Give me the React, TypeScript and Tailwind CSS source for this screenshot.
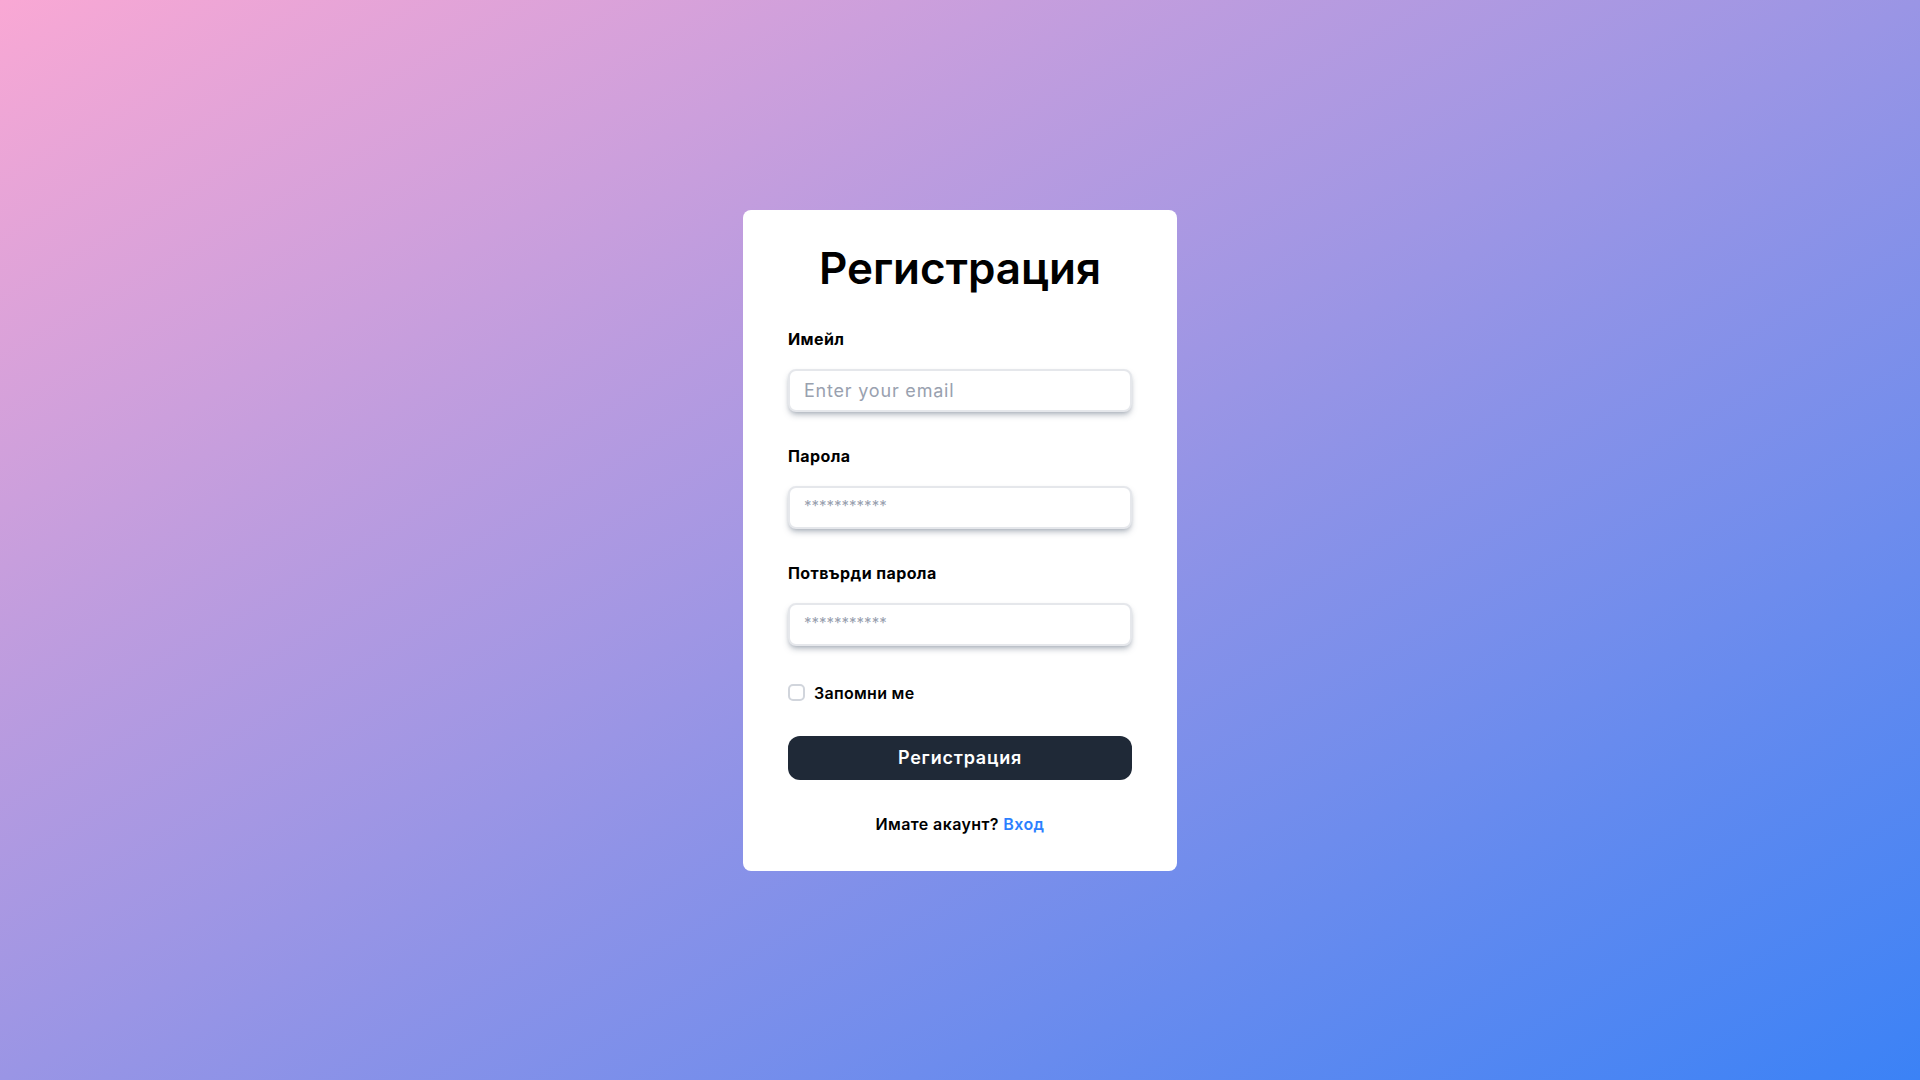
import React from "react";

export default function App() {
  const font = { fontFamily: "Inter, 'Noto Sans', sans-serif" };
  const inputCls =
    "mt-[20px] h-[43px] w-full rounded-lg border-2 border-gray-200 bg-white px-[14px] text-gray-700 placeholder:text-gray-400 shadow-[0_4px_6px_-1px_rgba(71,85,105,0.35),0_2px_4px_-2px_rgba(71,85,105,0.3)] outline-none";
  return (
    <div
      className="min-h-screen w-full flex items-center justify-center bg-[linear-gradient(to_bottom_right,#f9a8d4,#3b82f6)]"
      style={font}
    >
      <div className="w-[434px] h-[661px] bg-white rounded-lg px-[45px] pt-[33px] pb-[37px] flex flex-col">
        <h1 className="text-[44px] leading-[50px] font-semibold text-black text-center">
          Регистрация
        </h1>
        <form className="mt-[36px] flex flex-col" onSubmit={(e) => e.preventDefault()}>
          <label className="block h-[20px] text-[16px] leading-[20px] tracking-[0.4px] font-bold text-black">Имейл</label>
          <input
            type="email"
            placeholder="Enter your email"
            className={inputCls + " text-[18px] tracking-[0.8px]"}
          />
          <label className="mt-[34px] block h-[20px] text-[16px] leading-[20px] tracking-[0.4px] font-bold text-black">Парола</label>
          <input
            type="password"
            placeholder="***********"
            className={inputCls + " pb-[4px] text-[15px]"}
          />
          <label className="mt-[34px] block h-[20px] text-[16px] leading-[20px] tracking-[0.4px] font-bold text-black">Потвърди парола</label>
          <input
            type="password"
            placeholder="***********"
            className={inputCls + " pb-[4px] text-[15px]"}
          />
          <div className="mt-[37px] h-[20px] flex items-center gap-[9px]">
            <input
              type="checkbox"
              className="appearance-none w-[17px] h-[17px] rounded-[5px] border-2 border-gray-300 bg-white"
            />
            <span className="text-[16px] leading-[20px] tracking-[0.3px] font-semibold text-black">Запомни ме</span>
          </div>
          <button
            type="submit"
            className="mt-[33px] h-[44px] w-full rounded-xl bg-[#1f2937] text-white text-[18px] tracking-[0.8px] font-semibold"
          >
            Регистрация
          </button>
          <p className="mt-[34px] h-[20px] text-[16px] leading-[20px] tracking-[0.4px] font-semibold text-black text-center">
            Имате акаунт? <a href="#" className="text-blue-500">Вход</a>
          </p>
        </form>
      </div>
    </div>
  );
}
